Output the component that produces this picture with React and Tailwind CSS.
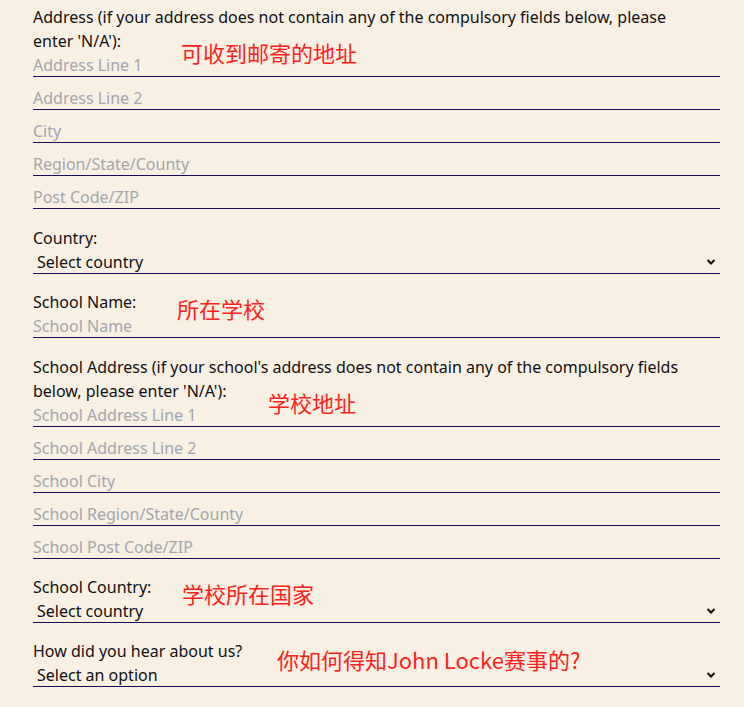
import React from "react";

const font = { fontFamily: "'Noto Sans', sans-serif" };

function Chevron() {
  return (
    <svg width="10" height="7" viewBox="0 0 10 7" className="absolute right-[4px] top-1/2 -translate-y-1/2">
      <path d="M1.5 1.5 L5 5 L8.5 1.5" fill="none" stroke="#111" strokeWidth="2" />
    </svg>
  );
}

function Input({ ph, first }) {
  return (
    <div className={`${first ? "" : "mt-[9px]"} h-[24px] border-b border-[#1b0a5e] flex items-center text-[#a3a6ad]`}>
      {ph}
    </div>
  );
}

function Select({ text }) {
  return (
    <div className="relative h-[24px] border-b border-[#1b0a5e] flex items-center pl-[4px] text-[#111]">
      {text}
      <Chevron />
    </div>
  );
}

function Note({ children, className }) {
  return (
    <div
      className={`absolute text-[22px] leading-none text-[#ff2222] whitespace-nowrap ${className}`}
      style={{ fontFamily: "'Noto Sans CJK SC', 'Noto Sans', sans-serif" }}
    >
      {children}
    </div>
  );
}

export default function App() {
  return (
    <div className="relative w-[744px] h-[707px] bg-[#f9f0e4] overflow-hidden" style={font}>
      <div className="pl-[33px] pr-[24px] pt-[5px] text-[16px] leading-[24px] text-[#111]">
        <div className="mb-[17px]">
          <div>Address (if your address does not contain any of the compulsory fields below, please<br />enter 'N/A'):</div>
          <Input ph="Address Line 1" first />
          <Input ph="Address Line 2" />
          <Input ph="City" />
          <Input ph="Region/State/County" />
          <Input ph="Post Code/ZIP" />
        </div>
        <div className="mb-[16px]">
          <div>Country:</div>
          <Select text="Select country" />
        </div>
        <div className="mb-[17px]">
          <div>School Name:</div>
          <Input ph="School Name" first />
        </div>
        <div className="mb-[16px]">
          <div>School Address (if your school's address does not contain any of the compulsory fields<br />below, please enter 'N/A'):</div>
          <Input ph="School Address Line 1" first />
          <Input ph="School Address Line 2" />
          <Input ph="School City" />
          <Input ph="School Region/State/County" />
          <Input ph="School Post Code/ZIP" />
        </div>
        <div className="mb-[16px]">
          <div>School Country:</div>
          <Select text="Select country" />
        </div>
        <div>
          <div>How did you hear about us?</div>
          <Select text="Select an option" />
        </div>
      </div>
      <Note className="left-[181px] top-[41px]">可收到邮寄的地址</Note>
      <Note className="left-[177px] top-[297px]">所在学校</Note>
      <Note className="left-[268px] top-[391px]">学校地址</Note>
      <Note className="left-[182px] top-[582px]">学校所在国家</Note>
      <Note className="left-[277px] top-[648px]">你如何得知John Locke赛事的?</Note>
    </div>
  );
}
